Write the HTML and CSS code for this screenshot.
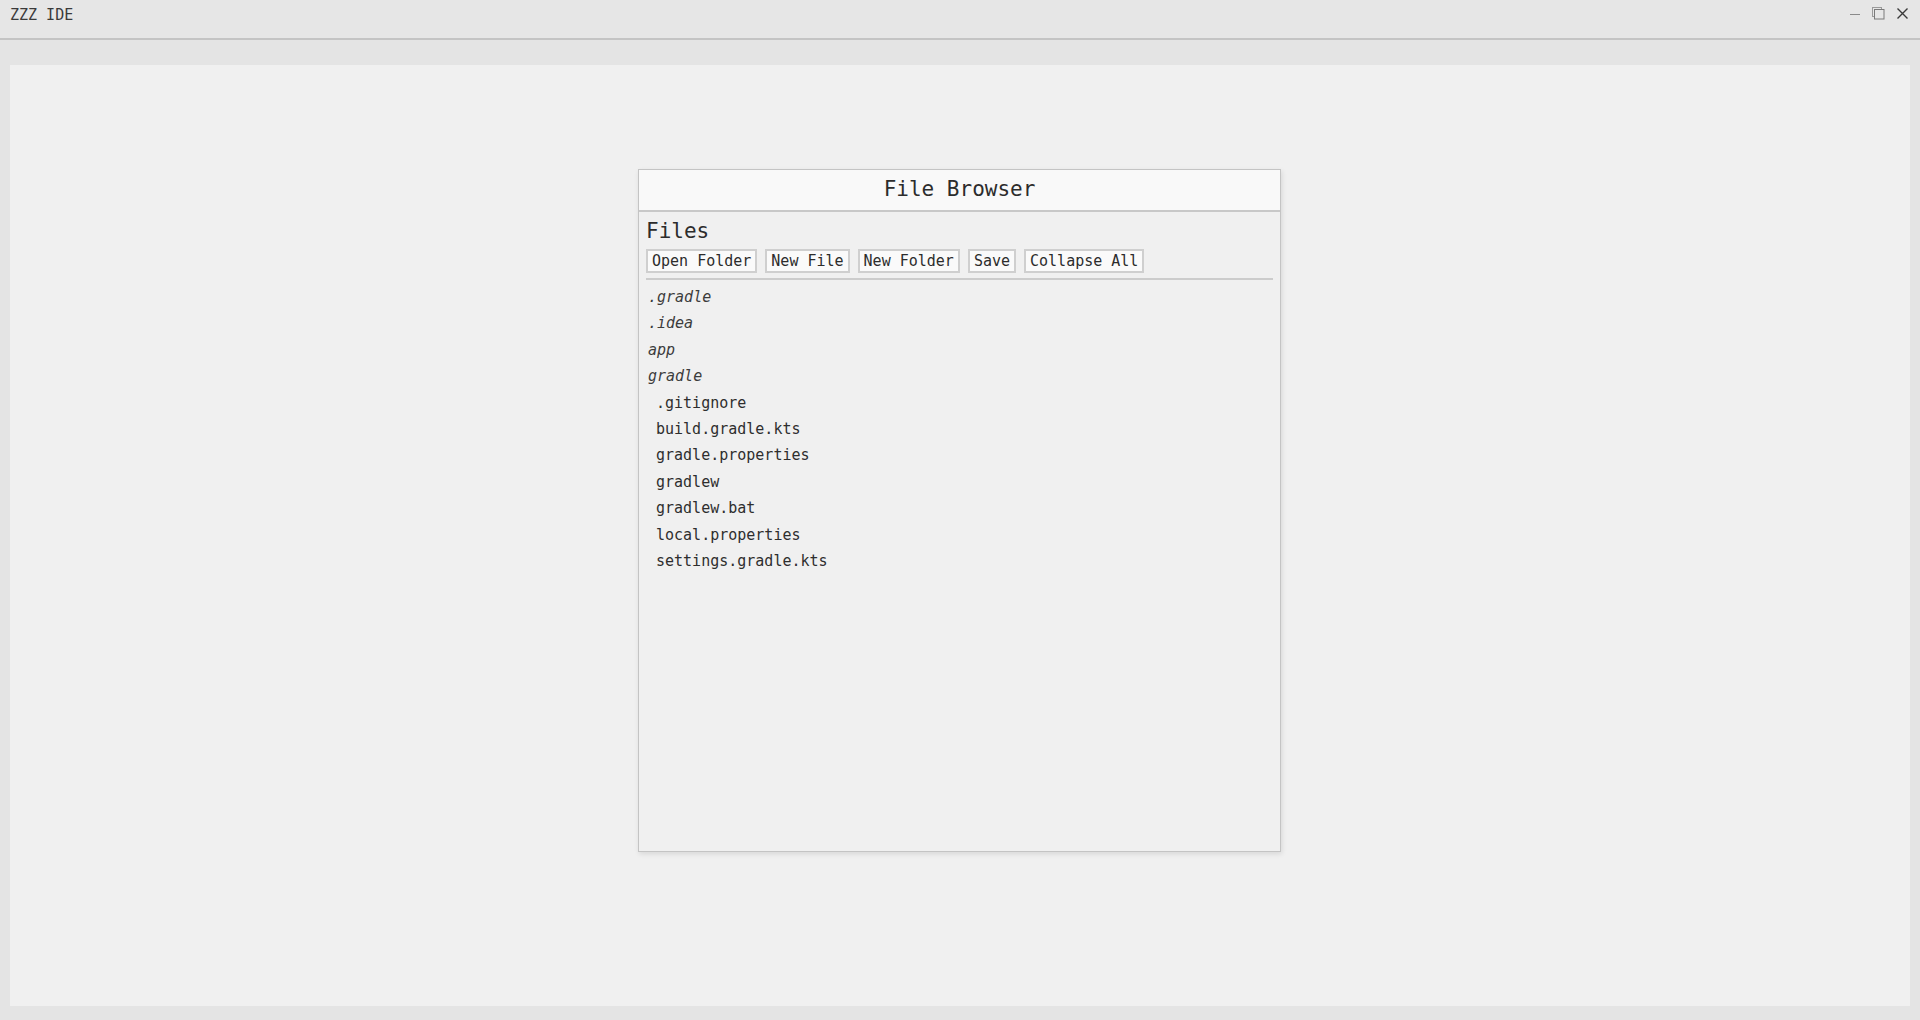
FILE: index.html
```html
<!DOCTYPE html>
<html>
<head>
<meta charset="utf-8">
<title>ZZZ IDE</title>
<link rel="stylesheet" href="styles.css">
</head>
<body>
<div class="titlebar">
  <span class="app-title">ZZZ IDE</span>
  <div class="controls">
    <svg class="ctl" width="12" height="12" viewBox="0 0 12 12"><line x1="1" y1="6.5" x2="11" y2="6.5" stroke="#8a8a8a" stroke-width="1"/></svg>
    <svg class="ctl" width="13" height="13" viewBox="0 0 13 13"><rect x="0.5" y="0.5" width="9" height="9" fill="none" stroke="#9a9a9a" stroke-width="1"/><rect x="2.5" y="2.5" width="9.5" height="9.5" fill="#e6e6e6" stroke="#7a7a7a" stroke-width="1"/></svg>
    <svg class="ctl" width="13" height="13" viewBox="0 0 13 13"><path d="M1.5 1.5 L11.5 11.5 M11.5 1.5 L1.5 11.5" stroke="#3a3a3a" stroke-width="1.4" fill="none"/></svg>
  </div>
</div>
<div class="workspace">
  <div class="canvas">
    <div class="panel">
      <div class="panel-header">File Browser</div>
      <div class="panel-body">
        <div class="section-title">Files</div>
        <div class="toolbar">
          <button class="btn">Open Folder</button>
          <button class="btn">New File</button>
          <button class="btn">New Folder</button>
          <button class="btn">Save</button>
          <button class="btn">Collapse All</button>
        </div>
        <div class="tree">
          <div class="item folder">.gradle</div>
          <div class="item folder">.idea</div>
          <div class="item folder">app</div>
          <div class="item folder">gradle</div>
          <div class="item file">.gitignore</div>
          <div class="item file">build.gradle.kts</div>
          <div class="item file">gradle.properties</div>
          <div class="item file">gradlew</div>
          <div class="item file">gradlew.bat</div>
          <div class="item file">local.properties</div>
          <div class="item file">settings.gradle.kts</div>
        </div>
      </div>
    </div>
  </div>
</div>
</body>
</html>
```
FILE: styles.css
```css
html, body {
  margin: 0;
  padding: 0;
  height: 100%;
}
body {
  background: #e4e4e4;
  font-family: "DejaVu Sans Mono", "Liberation Mono", monospace;
  color: #333;
  overflow: hidden;
}
.titlebar {
  height: 40px;
  box-sizing: border-box;
  border-bottom: 2px solid #c4c4c4;
  background: #e6e6e6;
  display: flex;
  align-items: flex-start;
  padding: 4px 0 0 10px;
}
.app-title {
  font-size: 15px;
  line-height: 22px;
  color: #3a3a3a;
}
.controls {
  margin-left: auto;
  display: flex;
  align-items: center;
  gap: 11px;
  padding-top: 3px;
  padding-right: 11px;
}
.ctl {
  display: block;
}
.workspace {
  padding: 25px 10px 14px 10px;
  height: calc(100% - 40px);
  box-sizing: border-box;
}
.canvas {
  background: #f0f0f0;
  height: 941px;
  display: flex;
  justify-content: center;
  align-items: flex-start;
  padding-top: 104px;
  padding-right: 1px;
  box-sizing: border-box;
}
.panel {
  width: 643px;
  height: 683px;
  box-sizing: border-box;
  border: 1px solid #c4c4c4;
  background: #f0f0f0;
  box-shadow: 1px 2px 5px rgba(0, 0, 0, 0.10);
  display: flex;
  flex-direction: column;
}
.panel-header {
  height: 40px;
  border-bottom: 2px solid #c8c8c8;
  background: #f9f9f9;
  text-align: center;
  font-size: 21px;
  line-height: 39px;
  color: #2c2c2c;
}
.panel-body {
  padding: 6px 7px 0 7px;
}
.section-title {
  font-size: 21px;
  line-height: 26px;
  color: #2c2c2c;
}
.toolbar {
  display: flex;
  gap: 8px;
  margin-top: 5px;
  padding-bottom: 5px;
  border-bottom: 2px solid #cccccc;
}
.btn {
  font-family: "DejaVu Sans Mono", "Liberation Mono", monospace;
  font-size: 15px;
  line-height: 20px;
  height: 24px;
  padding: 0 4px;
  margin: 0;
  border: 2px solid #cfcfcf;
  background: #fafafa;
  color: #2c2c2c;
  border-radius: 0;
}
.tree {
  padding: 4px 0 0 2px;
}
.item {
  font-size: 15px;
  line-height: 26.4px;
  height: 26.4px;
  color: #2e2e2e;
  white-space: pre;
}
.folder {
  font-style: italic;
  color: #3c3c3c;
}
.file {
  padding-left: 8px;
}
```
